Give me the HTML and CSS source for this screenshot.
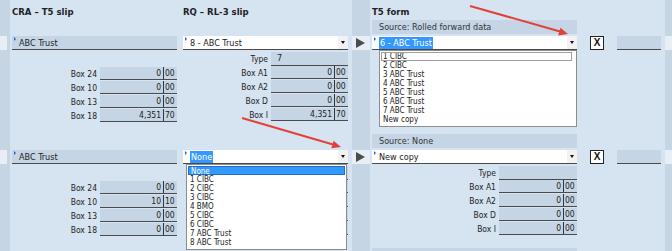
FILE: index.html
```html
<!DOCTYPE html>
<html lang="en">
  <head>
    <meta charset="UTF-8" />
    <title>T5 slip reconciliation</title>
    <link rel="stylesheet" href="styles.css">
  </head>
  <body>
    <div class="screen">
      <div class="heads">
        <h2 class="h-cra">CRA – T5 slip</h2>
        <h2 class="h-rq">RQ – RL-3 slip</h2>
        <h2 class="h-t5">T5 form</h2>
      </div>

      <!-- slip 1 -->
      <div class="group">
        <div class="col strip-l">
          <div class="src"></div>
          <div class="sel cur"></div>
        </div>
        <div class="col cra">
          <div class="src"></div>
          <div class="sel field name"><span class="mark"></span>ABC Trust</div>
          <div class="type"></div>
          <div class="box"><span>Box 24</span><div class="fld"><span class="int">0</span><span class="dec">00</span></div></div>
          <div class="box"><span>Box 10</span><div class="fld"><span class="int">0</span><span class="dec">00</span></div></div>
          <div class="box"><span>Box 13</span><div class="fld"><span class="int">0</span><span class="dec">00</span></div></div>
          <div class="box"><span>Box 18</span><div class="fld"><span class="int">4,351</span><span class="dec">70</span></div></div>
        </div>
        <div class="col rq">
          <div class="src"></div>
          <div class="sel combo"><span class="mark"></span><span class="val">8 - ABC Trust</span><span class="drop"></span></div>
          <div class="type box"><span>Type</span><div class="fld txt">7</div></div>
          <div class="box"><span>Box A1</span><div class="fld"><span class="int">0</span><span class="dec">00</span></div></div>
          <div class="box"><span>Box A2</span><div class="fld"><span class="int">0</span><span class="dec">00</span></div></div>
          <div class="box"><span>Box D</span><div class="fld"><span class="int">0</span><span class="dec">00</span></div></div>
          <div class="box"><span>Box I</span><div class="fld"><span class="int">4,351</span><span class="dec">70</span></div></div>
        </div>
        <div class="col sep">
          <div class="src"></div>
          <div class="sel cur"><svg width="10" height="10" viewBox="0 0 10 10"><polygon points="1,0 10,5 1,10" fill="#4d4d4d"/></svg></div>
        </div>
        <div class="col t5">
          <div class="src bar">Source: Rolled forward data</div>
          <div class="sel combo">
            <span class="mark"></span><span class="val"><span class="hl">6 - ABC Trust</span></span><span class="drop"></span>
            <ul class="list list-t5">
              <li class="focus">1 CIBC</li>
              <li>2 CIBC</li>
              <li>3 ABC Trust</li>
              <li>4 ABC Trust</li>
              <li>5 ABC Trust</li>
              <li>6 ABC Trust</li>
              <li>7 ABC Trust</li>
              <li>New copy</li>
            </ul>
          </div>
          <div class="type box"><span>Type</span><div class="fld txt"></div></div>
          <div class="box"><span>Box A1</span><div class="fld"><span class="int">0</span><span class="dec">00</span></div></div>
          <div class="box"><span>Box A2</span><div class="fld"><span class="int">0</span><span class="dec">00</span></div></div>
          <div class="box"><span>Box D</span><div class="fld"><span class="int">0</span><span class="dec">00</span></div></div>
          <div class="box"><span>Box I</span><div class="fld"><span class="int">4,351</span><span class="dec">70</span></div></div>
        </div>
        <div class="col xcol">
          <div class="src"></div>
          <div class="sel"><button class="xbtn">X</button></div>
        </div>
        <div class="col extra">
          <div class="src"></div>
          <div class="sel field"></div>
        </div>
        <div class="col strip-r">
          <div class="src"></div>
          <div class="sel cur"></div>
        </div>
      </div>

      <!-- slip 2 -->
      <div class="group">
        <div class="col strip-l">
          <div class="src"></div>
          <div class="sel cur"></div>
        </div>
        <div class="col cra">
          <div class="src"></div>
          <div class="sel field name"><span class="mark"></span>ABC Trust</div>
          <div class="type"></div>
          <div class="box"><span>Box 24</span><div class="fld"><span class="int">0</span><span class="dec">00</span></div></div>
          <div class="box"><span>Box 10</span><div class="fld"><span class="int">10</span><span class="dec">10</span></div></div>
          <div class="box"><span>Box 13</span><div class="fld"><span class="int">0</span><span class="dec">00</span></div></div>
          <div class="box"><span>Box 18</span><div class="fld"><span class="int">0</span><span class="dec">00</span></div></div>
        </div>
        <div class="col rq">
          <div class="src"></div>
          <div class="sel combo">
            <span class="mark"></span><span class="val"><span class="hl">None</span></span><span class="drop"></span>
            <ul class="list list-rq">
              <li class="picked">None</li>
              <li>1 CIBC</li>
              <li>2 CIBC</li>
              <li>3 CIBC</li>
              <li>4 BMO</li>
              <li>5 CIBC</li>
              <li>6 CIBC</li>
              <li>7 ABC Trust</li>
              <li>8 ABC Trust</li>
            </ul>
          </div>
          <div class="type box"><span>Type</span><div class="fld txt"></div></div>
          <div class="box"><span>Box A1</span><div class="fld"><span class="int">0</span><span class="dec">00</span></div></div>
          <div class="box"><span>Box A2</span><div class="fld"><span class="int">0</span><span class="dec">00</span></div></div>
          <div class="box"><span>Box D</span><div class="fld"><span class="int">0</span><span class="dec">00</span></div></div>
          <div class="box"><span>Box I</span><div class="fld"><span class="int">0</span><span class="dec">00</span></div></div>
        </div>
        <div class="col sep">
          <div class="src"></div>
          <div class="sel cur"><svg width="10" height="10" viewBox="0 0 10 10"><polygon points="1,0 10,5 1,10" fill="#4d4d4d"/></svg></div>
        </div>
        <div class="col t5">
          <div class="src bar">Source: None</div>
          <div class="sel combo"><span class="mark"></span><span class="val">New copy</span><span class="drop"></span></div>
          <div class="type box"><span>Type</span><div class="fld txt"></div></div>
          <div class="box"><span>Box A1</span><div class="fld"><span class="int">0</span><span class="dec">00</span></div></div>
          <div class="box"><span>Box A2</span><div class="fld"><span class="int">0</span><span class="dec">00</span></div></div>
          <div class="box"><span>Box D</span><div class="fld"><span class="int">0</span><span class="dec">00</span></div></div>
          <div class="box"><span>Box I</span><div class="fld"><span class="int">0</span><span class="dec">00</span></div></div>
        </div>
        <div class="col xcol">
          <div class="src"></div>
          <div class="sel"><button class="xbtn">X</button></div>
        </div>
        <div class="col extra">
          <div class="src"></div>
          <div class="sel field"></div>
        </div>
        <div class="col strip-r">
          <div class="src"></div>
          <div class="sel cur"></div>
        </div>
      </div>

      <!-- slip 3, cut off by the window -->
      <div class="group">
        <div class="col strip-l"></div>
        <div class="col cra"></div>
        <div class="col rq"></div>
        <div class="col sep"></div>
        <div class="col t5">
          <div class="src bar"></div>
        </div>
      </div>

      <svg class="callouts" width="672" height="251" viewBox="0 0 672 251">
        <line x1="470" y1="6" x2="560" y2="31.5" stroke="#e2413a" stroke-width="2" />
        <polygon points="568,34 558.2,35.4 560.4,27.7" fill="#e2413a" />
        <line x1="242" y1="118" x2="333" y2="144.5" stroke="#e2413a" stroke-width="2" />
        <polygon points="341,147 331.3,148.3 333.5,140.7" fill="#e2413a" />
      </svg>
    </div>
  </body>
</html>
```

FILE: styles.css
```css
* {
  margin: 0;
  padding: 0;
  box-sizing: border-box;
}
body {
  width: 672px;
  height: 251px;
  overflow: hidden;
  font-family: "DejaVu Sans Condensed", "DejaVu Sans", "Liberation Sans", sans-serif;
  font-size: 8.5px;
  color: #222;
}
.screen {
  position: relative;
  height: 251px;
  overflow: hidden;
  /* the three darker row-header strips */
  background: linear-gradient(
    to right,
    #c6d5e4 0 10px,
    transparent 10px 352px,
    #c6d5e4 352px 370px,
    transparent 370px 665px,
    #c6d5e4 665px
  ),
  #d6e4f1;
}

/* headings */
.heads {
  display: flex;
  height: 20px;
  align-items: center;
  padding-top: 2px;
}
.heads h2 {
  font-size: 9.5px;
  font-weight: bold;
}
.h-cra {
  width: 183px;
  padding-left: 12px;
}
.h-rq {
  width: 189px;
}

/* one slip = one row group */
.group {
  display: flex;
  padding-bottom: 11px;
}
.col {
  display: flex;
  flex-direction: column;
  flex-shrink: 0;
}
.strip-l { width: 10px; margin-right: 2px; }
.cra { width: 165px; margin-right: 6px; }
.rq { width: 165px; margin-right: 4px; }
.sep { width: 18px; margin-right: 2px; }
.t5 { width: 205px; margin-right: 13px; }
.xcol { width: 14px; margin-right: 13px; }
.extra { width: 44px; margin-right: 4px; }
.strip-r { width: 7px; }

.src { height: 14px; margin-bottom: 2px; }
.sel { height: 14px; margin-bottom: 2px; font-size: 9px; }
.type { height: 14px; margin-bottom: 1px; }
.box { height: 13px; margin-bottom: 1px; }

.cur {
  background: #e7eef5;
  display: flex;
  align-items: center;
  padding-left: 3px;
}
.strip-l .cur {
  width: 7px;
}

.bar {
  background: #c5d5e5;
  padding-left: 7px;
  display: flex;
  align-items: center;
  color: #333;
  font-size: 9px;
}

/* fields */
.field {
  background: #c5d5e5;
  border-bottom: 1px solid #4a4a4a;
}
.name {
  display: flex;
  align-items: center;
}
.mark {
  align-self: flex-start;
  width: 0;
  height: 0;
  margin: 1px 3px 0 2px;
  border-left: 2px solid #2f5fd8;
  border-top: 2px solid transparent;
  border-bottom: 2px solid transparent;
}

.combo {
  position: relative;
  display: flex;
  align-items: center;
  background: #fff;
  border-bottom: 1px solid #4a4a4a;
}
.combo .val {
  flex: 1;
}
.hl {
  background: #3399ff;
  color: #fff;
  padding: 1px 1px;
}
.drop {
  width: 10px;
  height: 13px;
  background: #f2f2f2;
  display: flex;
  align-items: center;
  justify-content: center;
}
.drop::after {
  content: "";
  border-top: 3px solid #111;
  border-left: 2.5px solid transparent;
  border-right: 2.5px solid transparent;
}

.box {
  display: flex;
  justify-content: flex-end;
  align-items: center;
  gap: 3px;
}
.fld {
  width: 77px;
  height: 13px;
  display: flex;
  background: #c5d5e5;
  border-bottom: 1px solid #4a4a4a;
  line-height: 12px;
}
.t5 .fld {
  width: 78px;
}
.fld.txt {
  height: 14px;
  padding-left: 6px;
  font-size: 9px;
}
.int {
  flex: 1;
  text-align: right;
  padding-right: 2px;
}
.dec {
  width: 14px;
  border-left: 1px solid #333;
  padding-left: 1px;
}

.xbtn {
  width: 14px;
  height: 14px;
  background: #fff;
  border: 1px solid #222;
  font-family: "Liberation Sans", sans-serif;
  font-weight: bold;
  font-size: 10px;
  color: #111;
  line-height: 12px;
}

/* open dropdown lists */
.list {
  position: absolute;
  top: 14px;
  z-index: 2;
  list-style: none;
  background: #fff;
  border: 1px solid #8c8c8c;
  padding: 1px 1px 2px;
  font-size: 8px;
  color: #222;
}
.list li {
  height: 9px;
  line-height: 9px;
  padding-left: 2px;
}
.list-t5 {
  left: 7px;
  width: 198px;
}
.list-rq {
  left: 3px;
  width: 161px;
}
.list .focus {
  outline: 1px solid #a0a0a0;
  outline-offset: -1px;
  margin-right: 3px;
}
.list .picked {
  background: #3399ff;
  color: #fff;
  border: 1px solid #1f6fc4;
}

.callouts {
  position: absolute;
  top: 0;
  left: 0;
  pointer-events: none;
  z-index: 3;
}
```
